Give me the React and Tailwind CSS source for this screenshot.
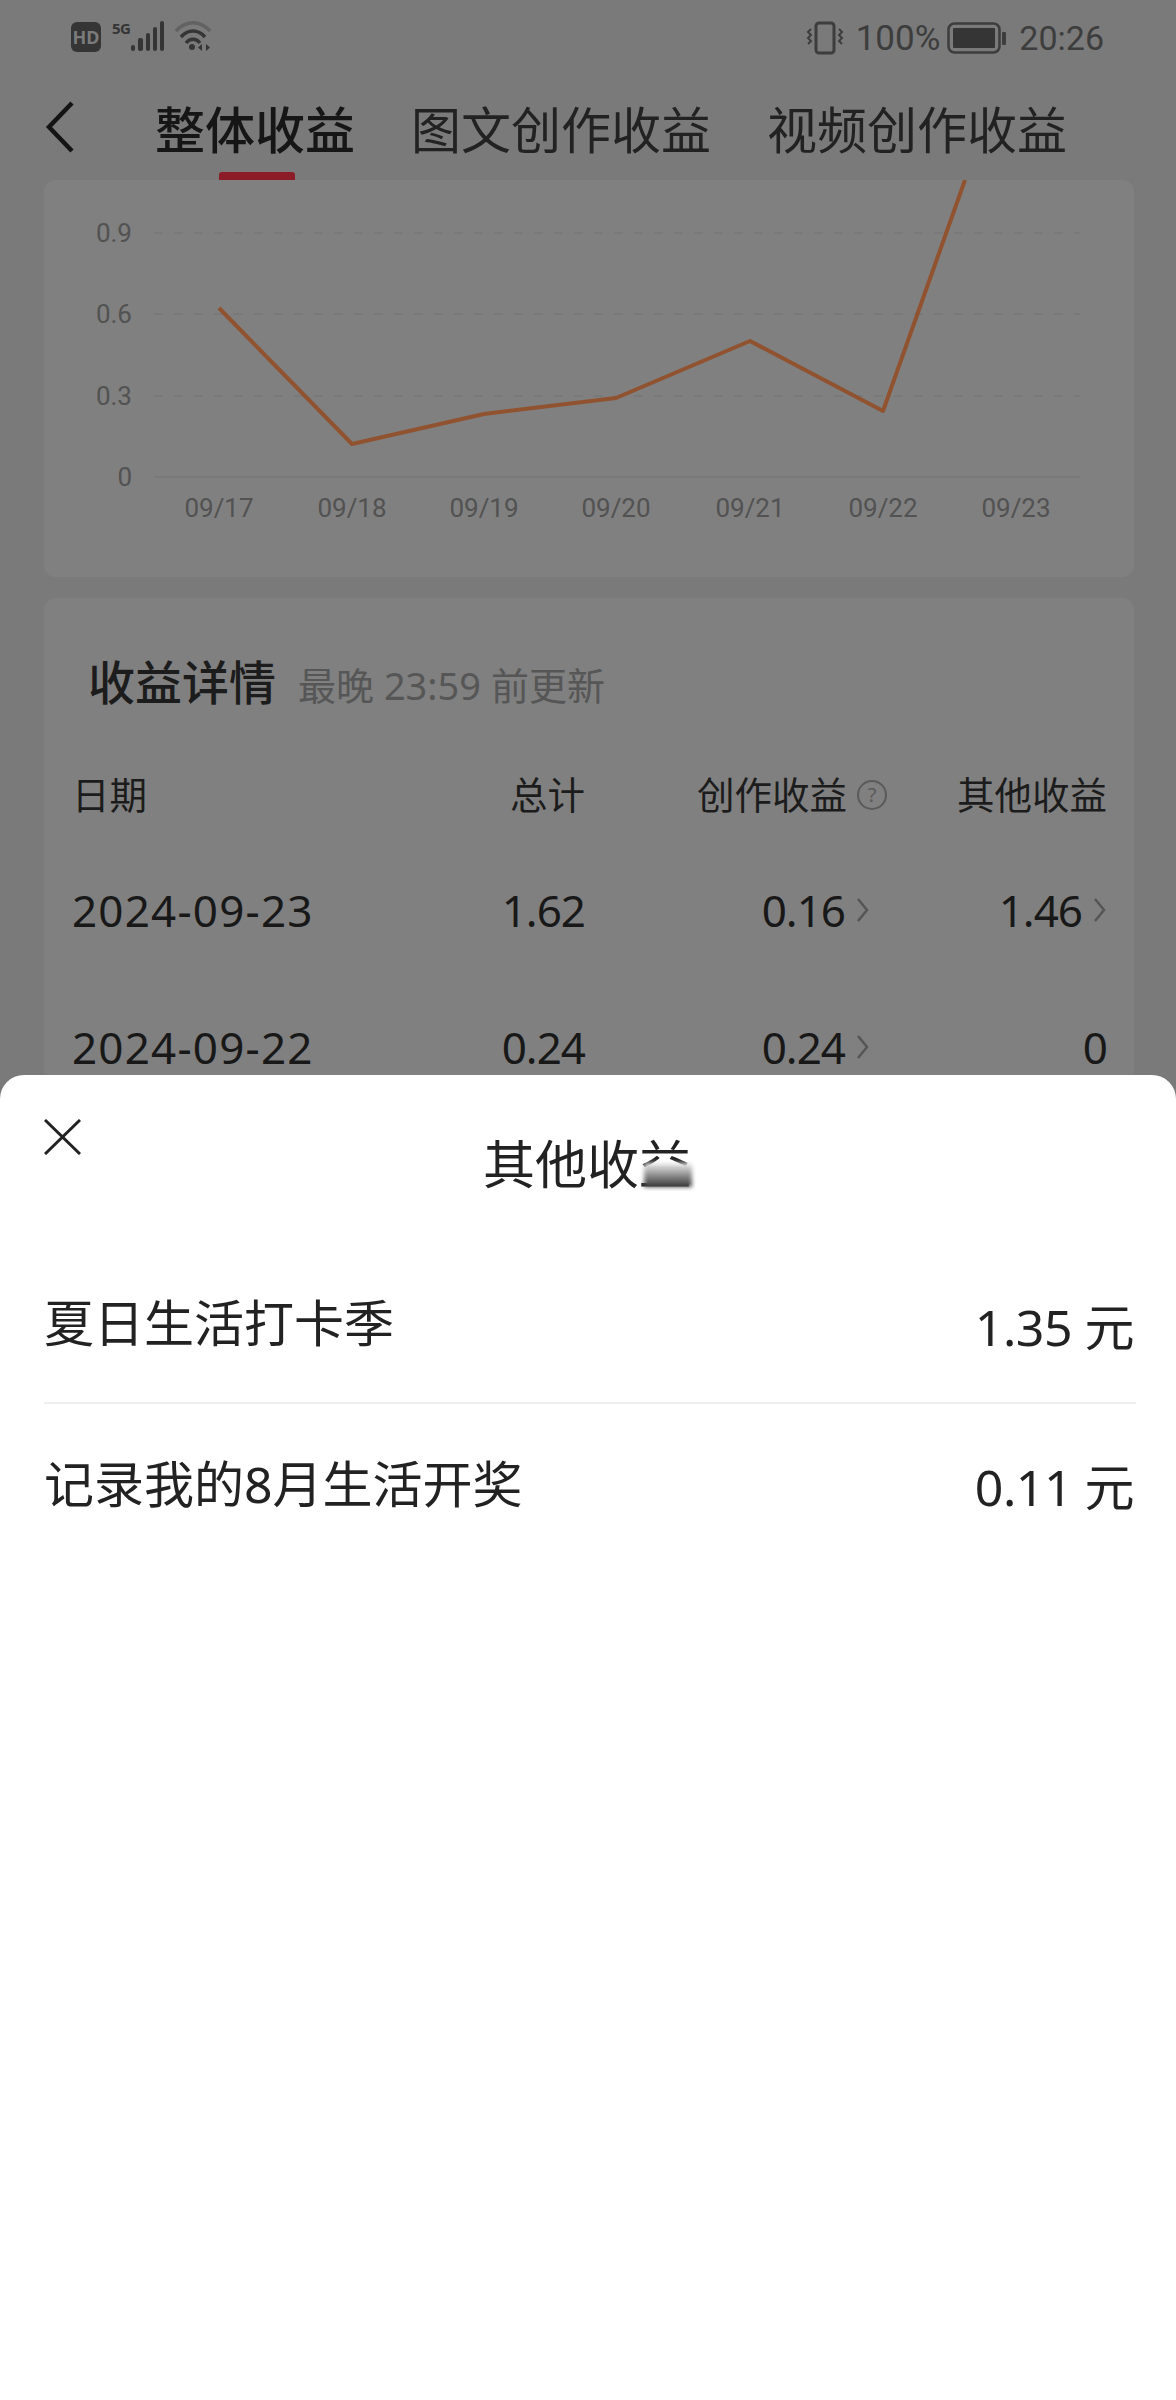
import React from "react";

const points = "219,308 352,444 484,414 616,398 750,341 883,411 965,180";
const xLabels = [
  ["09/17", 219],
  ["09/18", 352],
  ["09/19", 484],
  ["09/20", 616],
  ["09/21", 750],
  ["09/22", 883],
  ["09/23", 1016],
];
const yLabels = [
  ["0.9", 233],
  ["0.6", 314],
  ["0.3", 396],
];

const Chevron = () => (
  <svg width="14" height="26" viewBox="0 0 14 26" fill="none" stroke="#555555" strokeWidth="2.5">
    <path d="M2 2l9 11-9 11" />
  </svg>
);

const StatusLeft = () => (
  <div className="flex items-start">
    <div className="ml-[71px] mt-[22px] w-[30px] h-[30px] rounded-[6px] bg-[#353535] flex items-center justify-center text-[18px] font-bold leading-none text-[#7b7b7b]">
      HD
    </div>
    <div className="ml-[11px] mt-[20px] w-[18px] text-[15px] font-bold leading-[16px] tracking-[-0.5px] text-[#353535]">5G</div>
    <svg className="mt-[20px]" width="36" height="32" viewBox="0 0 36 32" fill="#353535">
      <rect x="1" y="25" width="4" height="6" rx="2" />
      <rect x="8" y="18" width="5" height="13" rx="2" />
      <rect x="16" y="13" width="4" height="18" rx="2" />
      <rect x="23" y="7" width="4" height="24" rx="2" />
      <rect x="30" y="1" width="4" height="30" rx="2" />
    </svg>
    <svg className="ml-[8px] mt-[20px]" width="40" height="32" viewBox="0 0 40 32" fill="none" stroke="#353535">
      <path d="M2 11C12 0 26 0 36 11" stroke="#626262" strokeWidth="3.5" />
      <path d="M7 17C14 9 24 9 31 17" strokeWidth="3.5" />
      <path d="M12 23C16 18 22 18 26 23" strokeWidth="3.5" />
      <circle cx="18" cy="27" r="3" fill="#353535" stroke="none" />
      <path d="M28 24l-4 3.500 4 3.500zM32 24l4 3.500-4 3.500z" fill="#353535" stroke="none" />
    </svg>
  </div>
);

const StatusRight = () => (
  <div className="flex items-center pr-[72px] pt-[2px] h-[74px] text-[#3d3d3d]">
    <svg width="40" height="34" viewBox="0 0 40 34" fill="none" stroke="#3d3d3d">
      <rect x="11" y="2" width="18" height="30" rx="3" strokeWidth="3" />
      <path d="M6 8l-3 3 3 3-3 3 3 3-3 3M34 8l3 3-3 3 3 3-3 3 3 3" strokeWidth="2" />
    </svg>
    <span className="ml-[11px] text-[35px] leading-none font-['Roboto',sans-serif]">100%</span>
    <svg className="ml-[7px]" width="60" height="32" viewBox="0 0 60 32" fill="none">
      <rect x="1.500" y="1.500" width="51" height="29" rx="6" stroke="#3d3d3d" strokeWidth="2.500" />
      <rect x="6" y="6" width="42" height="20" rx="1" fill="#353535" />
      <rect x="55" y="10" width="4" height="13" rx="1" fill="#3d3d3d" />
    </svg>
    <span className="ml-[12px] text-[34px] leading-none font-['Roboto',sans-serif]">20:26</span>
  </div>
);

const TrendChart = () => (
  <svg className="block w-full h-[397px]" viewBox="44 180 1090 397" fill="none">
    {yLabels.map(([label, y]) => (
      <g key={label}>
        <path d={`M154 ${y}H1080`} stroke="#797979" strokeWidth="2" strokeDasharray="9 11" />
        <text x="132" y={y + 9} textAnchor="end" fontSize="26" fill="#525252" fontFamily="Roboto">
          {label}
        </text>
      </g>
    ))}
    <path d="M154 477H1080" stroke="#797979" strokeWidth="2" />
    <text x="132" y="486" textAnchor="end" fontSize="26" fill="#525252" fontFamily="Roboto">
      0
    </text>
    {xLabels.map(([label, x]) => (
      <text key={label} x={x} y="517" textAnchor="middle" fontSize="26" fill="#525252" fontFamily="Roboto">
        {label}
      </text>
    ))}
    <polyline points={points} stroke="#90522f" strokeWidth="4" strokeLinejoin="round" />
  </svg>
);

const DataRow = ({ date, total, creation, other }) => (
  <div className="grid grid-cols-[300px_213px_302px_220px] h-[137px] items-center text-[44px] tracking-[-1px] text-[#181818]">
    <div className="tracking-[1.2px] whitespace-nowrap">{date}</div>
    <div className="text-right">{total}</div>
    <div className="flex items-center justify-end">
      <span>{creation}</span>
      <span className="w-[42px] flex justify-start pl-[11px]">
        <Chevron />
      </span>
    </div>
    {other === "0" ? (
      <div className="text-right">0</div>
    ) : (
      <div className="flex items-center justify-end">
        <span>{other}</span>
        <span className="w-[25px] flex justify-end">
          <Chevron />
        </span>
      </div>
    )}
  </div>
);

const SheetRow = ({ name, amount, last }) => (
  <div className={`flex justify-between items-center ${last ? "h-[160px]" : "h-[156px] border-b-[2px] border-[#eeeeee]"}`}>
    <span className={`text-[50px] leading-none text-[#222222] ${last ? "" : "-mt-[4px]"}`}>{name}</span>
    <span className={`text-[50px] leading-none tracking-[-0.5px] text-[#222222] pr-[2px] ${last ? "mt-[6px]" : "mt-[3px]"}`}>{amount} 元</span>
  </div>
);

export default function App() {
  return (
    <div className="relative h-[2400px] overflow-hidden bg-[#7a7a7a] font-['Noto_Sans','Noto_Sans_CJK_SC',sans-serif]">
      <div className="flex justify-between h-[74px]">
        <StatusLeft />
        <StatusRight />
      </div>

      <div className="flex items-center h-[106px] pl-[45px]">
        <svg width="30" height="52" viewBox="0 0 30 52" fill="none" stroke="#141414" strokeWidth="4.500">
          <path d="M27 2L4 26l23 24" />
        </svg>
        <div className="ml-[80px] pt-[6px] flex gap-[56px] text-[50px] leading-none text-[#222222]">
          <span className="relative font-medium text-[#161616]">
            整体收益
            <span className="absolute left-[64px] top-[67px] w-[76px] h-[8px] rounded-t-[3px] bg-[#8c1c28]"></span>
          </span>
          <span>图文创作收益</span>
          <span>视频创作收益</span>
        </div>
      </div>

      <div className="pl-[44px] pr-[42px]">
        <div className="rounded-[12px] bg-[#808080]">
          <TrendChart />
        </div>

        <div className="mt-[21px] h-[700px] rounded-[12px] bg-[#808080] pl-[28px] pt-[54px]">
          <div className="flex items-center h-[60px] pl-[16px]">
            <span className="text-[47px] font-medium leading-none text-[#1c1c1c]">收益详情</span>
            <span className="ml-[22px] mt-[6px] text-[38px] leading-none text-[#565656]">最晚 23:59 前更新</span>
          </div>

          <div className="mt-[53px] mb-[16px] grid grid-cols-[300px_213px_302px_220px] h-[60px] items-center text-[37.5px] text-[#1c1c1c]">
            <div>日期</div>
            <div className="text-right">总计</div>
            <div className="flex items-center justify-end">
              创作收益
              <span className="ml-[10px] w-[30px] h-[30px] rounded-full border-2 border-[#5a5a5a] flex items-center justify-center text-[20px] leading-none text-[#5a5a5a]">
                ?
              </span>
            </div>
            <div className="text-right">其他收益</div>
          </div>

          <DataRow date="2024-09-23" total="1.62" creation="0.16" other="1.46" />
          <DataRow date="2024-09-22" total="0.24" creation="0.24" other="0" />
        </div>
      </div>

      <div className="absolute left-0 right-0 top-[1075px] bottom-0 rounded-t-[24px] bg-white pl-[44px] pr-[40px]">
        <svg className="absolute left-[44px] top-[44px]" width="37" height="36" viewBox="0 0 37 36" fill="none" stroke="#222222" strokeWidth="3">
          <path d="M1 1l35 34M36 1L1 35" />
        </svg>
        <div className="pt-[59px] pr-[6px] h-[173px] flex justify-center">
          <span className="relative h-[60px] text-[52px] leading-[60px] text-[#222222]">
            其他收益
            <span className="absolute left-[161px] top-[29px] w-[48px] h-[24px] bg-gradient-to-b from-[#f2f2f2] to-[#3a3a3a] blur-[2px]"></span>
          </span>
        </div>
        <SheetRow name="夏日生活打卡季" amount="1.35" />
        <SheetRow name="记录我的8月生活开奖" amount="0.11" last />
      </div>
    </div>
  );
}
